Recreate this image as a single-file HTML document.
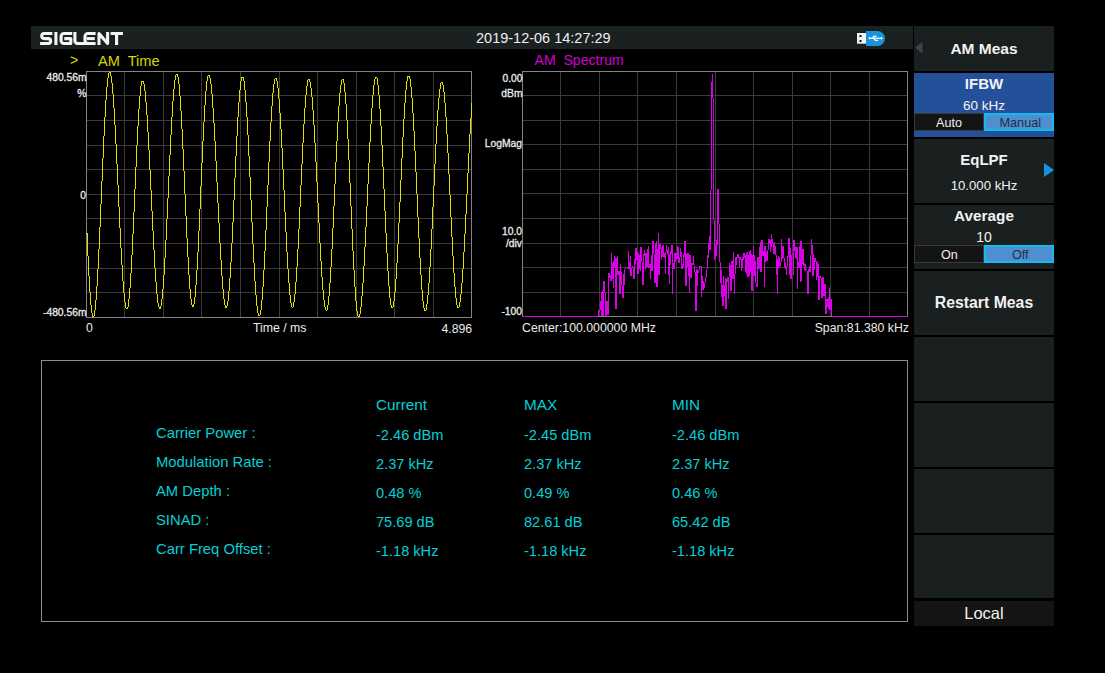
<!DOCTYPE html>
<html><head><meta charset="utf-8"><style>
html,body{margin:0;padding:0;background:#000;width:1105px;height:673px;overflow:hidden;position:relative}
body{font-family:"Liberation Sans",sans-serif;}
.t{position:absolute;white-space:pre;line-height:1}
.cy{color:#04d0d6}
.sl{-webkit-text-stroke:0.3px #ececec}
.sk{position:absolute;left:914px;width:140px;background:#1a1f1f}
.skt{position:absolute;left:0;width:140px;text-align:center;color:#f2f2f2;white-space:pre;line-height:1}
</style></head><body>
<div style="position:absolute;left:31px;top:26px;width:882px;height:23px;background:#1b2020"></div>
<svg style="position:absolute;left:0;top:0" width="130" height="50" viewBox="0 0 130 50">
<g fill="none" stroke="#f6f6f6" stroke-width="3.1" stroke-linejoin="round">
<path d="M52.4 33.5H44.3A2.55 2.55 0 0 0 44.3 38.6H48.2A2.45 2.45 0 0 1 48.2 43.5H40.1"/>
<path d="M55.9 32V45"/>
<path d="M72.3 33.5H64A2.9 2.9 0 0 0 61.1 36.4V40.6A2.9 2.9 0 0 0 64 43.5H70.8V38.6H64.3"/>
<path d="M74.9 32V40.8A2.7 2.7 0 0 0 77.6 43.5H95.6"/>
<path d="M95.6 33.5H87.9A2.9 2.9 0 0 0 85 36.4V40.6A2.9 2.9 0 0 0 87.9 43.5"/>
<path d="M86.6 38.6H94.8"/>
<path d="M99 45V33.6L107.6 43.4V32"/>
<path d="M110.6 33.5H122.9M116.6 33.5V45"/>
</g></svg>
<div class="t" style="left:476px;top:31px;font-size:14.5px;color:#f0f0f0">2019-12-06 14:27:29</div>
<svg style="position:absolute;left:850px;top:26px" width="45" height="24" viewBox="850 26 45 24">
<rect x="857" y="33" width="9.5" height="10.7" fill="#f2f2f2"/>
<rect x="859.5" y="35" width="2" height="2" fill="#111"/>
<rect x="859.5" y="40" width="2" height="2" fill="#111"/>
<path d="M866 31H877.5A7.5 7.5 0 0 1 877.5 46H866Z" fill="#1b93dc"/>
<g stroke="#fff" stroke-width="1.2" fill="none">
<path d="M869.5 38.3H881.5"/>
<path d="M872 38.3L874 36.3H876.5"/>
<path d="M873.5 38.3L875.5 40.4H878"/>
</g>
<circle cx="869.5" cy="38.3" r="1" fill="#fff"/>
<path d="M881 36.8L883 38.3L881 39.8Z" fill="#fff"/>
</svg>
<div class="t" style="left:70px;top:53px;font-size:14px;color:#d8d800">&gt;</div>
<div class="t" style="left:98px;top:54px;font-size:14.6px;color:#d8d800">AM  Time</div>
<div class="t" style="left:534.5px;top:53px;font-size:14.1px;color:#d400d4">AM  Spectrum</div>

<svg style="position:absolute;left:0;top:0" width="1105" height="673">
<rect x="124" y="71" width="1" height="246" fill="#3a3a3a"/>
<rect x="163" y="71" width="1" height="246" fill="#3a3a3a"/>
<rect x="201" y="71" width="1" height="246" fill="#3a3a3a"/>
<rect x="240" y="71" width="1" height="246" fill="#3a3a3a"/>
<rect x="279" y="71" width="1" height="246" fill="#3a3a3a"/>
<rect x="317" y="71" width="1" height="246" fill="#3a3a3a"/>
<rect x="356" y="71" width="1" height="246" fill="#3a3a3a"/>
<rect x="394" y="71" width="1" height="246" fill="#3a3a3a"/>
<rect x="433" y="71" width="1" height="246" fill="#3a3a3a"/>
<rect x="86" y="95" width="385" height="1" fill="#3a3a3a"/>
<rect x="86" y="120" width="385" height="1" fill="#3a3a3a"/>
<rect x="86" y="145" width="385" height="1" fill="#3a3a3a"/>
<rect x="86" y="169" width="385" height="1" fill="#3a3a3a"/>
<rect x="86" y="194" width="385" height="1" fill="#3a3a3a"/>
<rect x="86" y="218" width="385" height="1" fill="#3a3a3a"/>
<rect x="86" y="243" width="385" height="1" fill="#3a3a3a"/>
<rect x="86" y="268" width="385" height="1" fill="#3a3a3a"/>
<rect x="86" y="292" width="385" height="1" fill="#3a3a3a"/>
<rect x="86" y="71" width="386" height="1" fill="#848484"/>
<rect x="86" y="317" width="386" height="1" fill="#848484"/>
<rect x="86" y="71" width="1" height="247" fill="#848484"/>
<rect x="471" y="71" width="1" height="247" fill="#848484"/>
<rect x="560" y="71" width="1" height="245" fill="#3a3a3a"/>
<rect x="599" y="71" width="1" height="245" fill="#3a3a3a"/>
<rect x="637" y="71" width="1" height="245" fill="#3a3a3a"/>
<rect x="676" y="71" width="1" height="245" fill="#3a3a3a"/>
<rect x="715" y="71" width="1" height="245" fill="#3a3a3a"/>
<rect x="753" y="71" width="1" height="245" fill="#3a3a3a"/>
<rect x="792" y="71" width="1" height="245" fill="#3a3a3a"/>
<rect x="830" y="71" width="1" height="245" fill="#3a3a3a"/>
<rect x="869" y="71" width="1" height="245" fill="#3a3a3a"/>
<rect x="522" y="95" width="385" height="1" fill="#3a3a3a"/>
<rect x="522" y="120" width="385" height="1" fill="#3a3a3a"/>
<rect x="522" y="144" width="385" height="1" fill="#3a3a3a"/>
<rect x="522" y="169" width="385" height="1" fill="#3a3a3a"/>
<rect x="522" y="193" width="385" height="1" fill="#3a3a3a"/>
<rect x="522" y="218" width="385" height="1" fill="#3a3a3a"/>
<rect x="522" y="243" width="385" height="1" fill="#3a3a3a"/>
<rect x="522" y="267" width="385" height="1" fill="#3a3a3a"/>
<rect x="522" y="292" width="385" height="1" fill="#3a3a3a"/>
<rect x="522" y="71" width="386" height="1" fill="#848484"/>
<rect x="522" y="316" width="386" height="1" fill="#848484"/>
<rect x="522" y="71" width="1" height="246" fill="#848484"/>
<rect x="907" y="71" width="1" height="246" fill="#848484"/>
<path d="M86.5 233.3V234.3M87.5 233.3V255.7M88.5 255.7V275.7M89.5 275.7V292.4M90.5 292.4V305.2M91.5 305.2V313.4M92.5 313.4V316.9M93.5 315.6V316.9M94.5 309.8V315.6M95.5 299.8V309.8M96.5 286.0V299.8M97.5 268.8V286.0M98.5 248.9V268.8M99.5 227.0V248.9M100.5 203.9V227.0M101.5 180.5V203.9M102.5 157.5V180.5M103.5 136.0V157.5M104.5 116.6V136.0M105.5 100.0V116.6M106.5 86.9V100.0M107.5 77.7V86.9M108.5 72.8V77.7M109.5 72.3V73.3M110.5 72.3V75.8M111.5 75.8V83.1M112.5 83.1V93.9M113.5 93.9V107.9M114.5 107.9V124.6M115.5 124.6V143.5M116.5 143.5V164.0M117.5 164.0V185.3M118.5 185.3V206.8M119.5 206.8V227.8M120.5 227.8V247.5M121.5 247.5V265.4M122.5 265.4V280.9M123.5 280.9V293.3M124.5 293.3V302.4M125.5 302.4V307.8M126.5 307.8V309.4M127.5 306.6V309.4M128.5 299.4V306.6M129.5 288.1V299.4M130.5 273.0V288.1M131.5 254.8V273.0M132.5 234.2V254.8M133.5 212.1V234.2M134.5 189.2V212.1M135.5 166.6V189.2M136.5 145.1V166.6M137.5 125.7V145.1M138.5 108.9V125.7M139.5 95.6V108.9M140.5 86.3V95.6M141.5 81.3V86.3M142.5 80.8V81.8M143.5 80.8V84.2M144.5 84.2V91.3M145.5 91.3V101.8M146.5 101.8V115.4M147.5 115.4V131.6M148.5 131.6V149.9M149.5 149.9V169.8M150.5 169.8V190.4M151.5 190.4V211.2M152.5 211.2V231.4M153.5 231.4V250.4M154.5 250.4V267.5M155.5 267.5V282.2M156.5 282.2V294.0M157.5 294.0V302.5M158.5 302.5V307.4M159.5 307.4V308.5M160.5 305.7V308.5M161.5 299.0V305.7M162.5 288.6V299.0M163.5 274.9V288.6M164.5 258.4V274.9M165.5 239.5V258.4M166.5 219.0V239.5M167.5 197.6V219.0M168.5 175.9V197.6M169.5 154.7V175.9M170.5 134.8V154.7M171.5 116.8V134.8M172.5 101.3V116.8M173.5 88.9V101.3M174.5 79.9V88.9M175.5 74.8V79.9M176.5 73.6V74.8M177.5 73.6V76.7M178.5 76.7V84.1M179.5 84.1V95.5M180.5 95.5V110.5M181.5 110.5V128.6M182.5 128.6V148.9M183.5 148.9V170.9M184.5 170.9V193.6M185.5 193.6V216.1M186.5 216.1V237.7M187.5 237.7V257.4M188.5 257.4V274.6M189.5 274.6V288.6M190.5 288.6V298.9M191.5 298.9V305.0M192.5 305.0V306.8M193.5 304.0V306.8M194.5 296.8V304.0M195.5 285.4V296.8M196.5 270.3V285.4M197.5 252.0V270.3M198.5 231.3V252.0M199.5 209.0V231.3M200.5 186.0V209.0M201.5 163.2V186.0M202.5 141.4V163.2M203.5 121.6V141.4M204.5 104.5V121.6M205.5 90.8V104.5M206.5 81.1V90.8M207.5 75.6V81.1M208.5 74.7V75.7M209.5 74.7V77.7M210.5 77.7V84.3M211.5 84.3V94.4M212.5 94.4V107.5M213.5 107.5V123.4M214.5 123.4V141.4M215.5 141.4V161.1M216.5 161.1V181.6M217.5 181.6V202.5M218.5 202.5V223.1M219.5 223.1V242.6M220.5 242.6V260.4M221.5 260.4V276.0M222.5 276.0V288.9M223.5 288.9V298.6M224.5 298.6V304.9M225.5 304.9V307.5M226.5 306.2V307.5M227.5 300.7V306.2M228.5 291.2V300.7M229.5 278.0V291.2M230.5 261.6V278.0M231.5 242.6V261.6M232.5 221.8V242.6M233.5 199.8V221.8M234.5 177.6V199.8M235.5 155.9V177.6M236.5 135.6V155.9M237.5 117.3V135.6M238.5 101.8V117.3M239.5 89.7V101.8M240.5 81.3V89.7M241.5 77.0V81.3M242.5 77.0V78.0M243.5 77.0V81.2M244.5 81.2V89.5M245.5 89.5V101.6M246.5 101.6V117.0M247.5 117.0V135.2M248.5 135.2V155.5M249.5 155.5V177.4M250.5 177.4V199.8M251.5 199.8V222.2M252.5 222.2V243.7M253.5 243.7V263.4M254.5 263.4V280.9M255.5 280.9V295.3M256.5 295.3V306.3M257.5 306.3V313.4M258.5 313.4V316.3M259.5 315.0V316.3M260.5 309.5V315.0M261.5 299.8V309.5M262.5 286.5V299.8M263.5 269.9V286.5M264.5 250.7V269.9M265.5 229.5V250.7M266.5 207.2V229.5M267.5 184.5V207.2M268.5 162.2V184.5M269.5 141.2V162.2M270.5 122.2V141.2M271.5 105.9V122.2M272.5 92.9V105.9M273.5 83.7V92.9M274.5 78.6V83.7M275.5 77.7V78.7M276.5 77.7V80.9M277.5 80.9V88.0M278.5 88.0V98.7M279.5 98.7V112.6M280.5 112.6V129.4M281.5 129.4V148.3M282.5 148.3V168.8M283.5 168.8V190.1M284.5 190.1V211.5M285.5 211.5V232.2M286.5 232.2V251.5M287.5 251.5V268.7M288.5 268.7V283.3M289.5 283.3V294.7M290.5 294.7V302.5M291.5 302.5V306.5M292.5 306.5V307.5M293.5 302.3V306.5M294.5 294.0V302.3M295.5 282.0V294.0M296.5 266.7V282.0M297.5 248.7V266.7M298.5 228.6V248.7M299.5 207.2V228.6M300.5 185.3V207.2M301.5 163.7V185.3M302.5 143.1V163.7M303.5 124.4V143.1M304.5 108.2V124.4M305.5 95.2V108.2M306.5 85.8V95.2M307.5 80.4V85.8M308.5 79.1V80.4M309.5 79.1V81.6M310.5 81.6V87.8M311.5 87.8V97.4M312.5 97.4V110.0M313.5 110.0V125.4M314.5 125.4V142.9M315.5 142.9V162.1M316.5 162.1V182.4M317.5 182.4V203.0M318.5 203.0V223.4M319.5 223.4V242.8M320.5 242.8V260.8M321.5 260.8V276.6M322.5 276.6V289.8M323.5 289.8V300.0M324.5 300.0V306.9M325.5 306.9V310.2M326.5 309.7V310.7M327.5 305.0V309.7M328.5 296.1V305.0M329.5 283.4V296.1M330.5 267.4V283.4M331.5 248.7V267.4M332.5 227.9V248.7M333.5 206.0V227.9M334.5 183.5V206.0M335.5 161.6V183.5M336.5 140.8V161.6M337.5 122.1V140.8M338.5 106.1V122.1M339.5 93.4V106.1M340.5 84.5V93.4M341.5 79.8V84.5M342.5 79.4V80.4M343.5 79.4V83.4M344.5 83.4V91.8M345.5 91.8V104.2M346.5 104.2V120.2M347.5 120.2V139.2M348.5 139.2V160.3M349.5 160.3V182.9M350.5 182.9V206.1M351.5 206.1V229.0M352.5 229.0V250.7M353.5 250.7V270.4M354.5 270.4V287.3M355.5 287.3V300.9M356.5 300.9V310.5M357.5 310.5V315.9M358.5 315.9V316.9M359.5 313.7V316.8M360.5 306.8V313.7M361.5 296.3V306.8M362.5 282.6V296.3M363.5 266.0V282.6M364.5 247.3V266.0M365.5 226.9V247.3M366.5 205.5V226.9M367.5 183.8V205.5M368.5 162.6V183.8M369.5 142.4V162.6M370.5 124.1V142.4M371.5 108.1V124.1M372.5 94.9V108.1M373.5 85.1V94.9M374.5 79.0V85.1M375.5 76.6V79.0M376.5 76.6V78.4M377.5 78.4V84.5M378.5 84.5V94.6M379.5 94.6V108.5M380.5 108.5V125.6M381.5 125.6V145.2M382.5 145.2V166.6M383.5 166.6V188.9M384.5 188.9V211.4M385.5 211.4V233.2M386.5 233.2V253.4M387.5 253.4V271.3M388.5 271.3V286.2M389.5 286.2V297.5M390.5 297.5V304.8M391.5 304.8V307.9M392.5 306.7V307.9M393.5 301.2V306.7M394.5 291.9V301.2M395.5 278.9V291.9M396.5 262.7V278.9M397.5 244.0V262.7M398.5 223.4V244.0M399.5 201.7V223.4M400.5 179.5V201.7M401.5 157.9V179.5M402.5 137.4V157.9M403.5 118.9V137.4M404.5 103.1V118.9M405.5 90.4V103.1M406.5 81.4V90.4M407.5 76.4V81.4M408.5 75.6V76.6M409.5 75.6V79.0M410.5 79.0V86.5M411.5 86.5V97.9M412.5 97.9V112.7M413.5 112.7V130.5M414.5 130.5V150.5M415.5 150.5V172.0M416.5 172.0V194.3M417.5 194.3V216.6M418.5 216.6V238.0M419.5 238.0V257.8M420.5 257.8V275.3M421.5 275.3V289.8M422.5 289.8V300.8M423.5 300.8V307.9M424.5 307.9V310.9M425.5 309.7V310.9M426.5 304.4V309.7M427.5 295.3V304.4M428.5 282.6V295.3M429.5 266.9V282.6M430.5 248.7V266.9M431.5 228.6V248.7M432.5 207.3V228.6M433.5 185.7V207.3M434.5 164.4V185.7M435.5 144.3V164.4M436.5 126.1V144.3M437.5 110.4V126.1M438.5 97.7V110.4M439.5 88.6V97.7M440.5 83.3V88.6M441.5 82.1V83.3M442.5 82.1V85.0M443.5 85.0V91.9M444.5 91.9V102.6M445.5 102.6V116.6M446.5 116.6V133.6M447.5 133.6V152.8M448.5 152.8V173.5M449.5 173.5V195.0M450.5 195.0V216.5M451.5 216.5V237.2M452.5 237.2V256.4M453.5 256.4V273.4M454.5 273.4V287.4M455.5 287.4V298.1M456.5 298.1V305.0M457.5 305.0V307.9M458.5 306.8V307.9M459.5 302.2V306.8M460.5 294.1V302.2M461.5 282.8V294.1M462.5 268.6V282.8M463.5 252.1V268.6M464.5 233.7V252.1M465.5 214.0V233.7M466.5 193.6V214.0M467.5 173.1V193.6M468.5 153.2V173.1M469.5 134.4V153.2M470.5 117.5V134.4M471.5 102.8V117.5" stroke="#e2e000" stroke-width="1" fill="none" shape-rendering="crispEdges"/>
<path d="M522.5 316V317M523.5 316V317M524.5 316V317M525.5 316V317M526.5 316V317M527.5 316V317M528.5 316V317M529.5 316V317M530.5 316V317M531.5 316V317M532.5 316V317M533.5 316V317M534.5 316V317M535.5 316V317M536.5 316V317M537.5 316V317M538.5 316V317M539.5 316V317M540.5 316V317M541.5 316V317M542.5 316V317M543.5 316V317M544.5 316V317M545.5 316V317M546.5 316V317M547.5 316V317M548.5 316V317M549.5 316V317M550.5 316V317M551.5 316V317M552.5 316V317M553.5 316V317M554.5 316V317M555.5 316V317M556.5 316V317M557.5 316V317M558.5 316V317M559.5 316V317M560.5 316V317M561.5 316V317M562.5 316V317M563.5 316V317M564.5 316V317M565.5 316V317M566.5 316V317M567.5 316V317M568.5 316V317M569.5 316V317M570.5 316V317M571.5 316V317M572.5 316V317M573.5 316V317M574.5 316V317M575.5 316V317M576.5 316V317M577.5 316V317M578.5 316V317M579.5 316V317M580.5 316V317M581.5 316V317M582.5 316V317M583.5 316V317M584.5 316V317M585.5 316V317M586.5 316V317M587.5 316V317M588.5 316V317M589.5 316V317M590.5 316V317M591.5 316V317M592.5 316V317M593.5 316V317M594.5 316V317M595.5 316V317M596.5 316V317M597.5 316V317M598.5 310V316M599.5 310V312M600.5 301V310M601.5 292V316M602.5 291V316M603.5 281V316M604.5 281V293M605.5 293V316M606.5 301V316M607.5 301V315M608.5 273V315M609.5 273V278M610.5 275V281M611.5 253V281M612.5 263V279M613.5 261V288M614.5 256V268M615.5 258V309M616.5 258V309M617.5 256V275M618.5 271V275M619.5 271V294M620.5 264V294M621.5 272V285M622.5 285V298M623.5 274V298M624.5 269V285M625.5 267V269M626.5 267V268M627.5 268V269M628.5 251V269M629.5 262V269M630.5 256V276M631.5 268V276M632.5 266V268M633.5 267V279M634.5 259V279M635.5 248V264M636.5 248V260M637.5 252V274M638.5 253V274M639.5 255V269M640.5 247V271M641.5 247V262M642.5 262V285M643.5 254V285M644.5 250V256M645.5 253V270M646.5 253V267M647.5 249V267M648.5 246V268M649.5 264V268M650.5 264V279M651.5 255V271M652.5 241V271M653.5 241V254M654.5 254V283M655.5 244V283M656.5 241V287M657.5 249V287M658.5 233V275M659.5 244V275M660.5 244V249M661.5 247V259M662.5 245V257M663.5 245V257M664.5 253V258M665.5 252V274M666.5 245V252M667.5 250V254M668.5 247V275M669.5 254V284M670.5 251V265M671.5 245V254M672.5 245V294M673.5 263V269M674.5 253V269M675.5 253V262M676.5 253V259M677.5 246V259M678.5 247V263M679.5 257V263M680.5 248V257M681.5 252V269M682.5 264V269M683.5 254V267M684.5 241V257M685.5 241V286M686.5 254V286M687.5 253V267M688.5 253V276M689.5 255V293M690.5 255V278M691.5 263V278M692.5 263V265M693.5 256V265M694.5 265V272M695.5 272V311M696.5 269V311M697.5 270V286M698.5 270V273M699.5 266V270M700.5 266V267M701.5 266V297M702.5 276V290M703.5 281V290M704.5 283V288M705.5 277V283M706.5 269V277M707.5 255V269M708.5 243V258M709.5 236V250M710.5 190V250M711.5 82V190M712.5 74V98M713.5 98V220M714.5 220V260M715.5 245V258M716.5 240V256M717.5 189V245M718.5 189V224M719.5 224V262M720.5 262V283M721.5 270V297M722.5 285V306M723.5 276V306M724.5 285V296M725.5 278V309M726.5 279V309M727.5 277V282M728.5 277V299M729.5 263V277M730.5 265V291M731.5 261V291M732.5 261V279M733.5 252V279M734.5 274V294M735.5 257V274M736.5 257V265M737.5 254V258M738.5 254V258M739.5 257V268M740.5 257V260M741.5 259V271M742.5 257V268M743.5 253V260M744.5 253V258M745.5 255V272M746.5 253V274M747.5 252V277M748.5 255V277M749.5 251V276M750.5 250V272M751.5 254V291M752.5 255V291M753.5 246V276M754.5 255V276M755.5 261V283M756.5 283V287M757.5 257V287M758.5 257V269M759.5 247V269M760.5 242V272M761.5 240V272M762.5 240V256M763.5 251V256M764.5 246V287M765.5 246V262M766.5 252V261M767.5 250V261M768.5 239V250M769.5 239V244M770.5 240V252M771.5 234V247M772.5 239V244M773.5 243V254M774.5 242V254M775.5 246V255M776.5 255V275M777.5 259V294M778.5 256V268M779.5 257V268M780.5 262V266M781.5 239V262M782.5 246V259M783.5 246V258M784.5 258V267M785.5 263V269M786.5 266V275M787.5 256V266M788.5 238V257M789.5 238V275M790.5 248V279M791.5 255V279M792.5 254V255M793.5 240V275M794.5 240V251M795.5 247V258M796.5 247V259M797.5 247V289M798.5 262V268M799.5 246V268M800.5 241V282M801.5 241V281M802.5 249V264M803.5 249V266M804.5 263V270M805.5 264V270M806.5 269V271M807.5 271V294M808.5 269V294M809.5 266V272M810.5 255V272M811.5 239V255M812.5 245V276M813.5 254V276M814.5 258V270M815.5 258V262M816.5 261V280M817.5 262V277M818.5 264V300M819.5 276V300M820.5 276V278M821.5 278V298M822.5 277V298M823.5 277V296M824.5 284V296M825.5 284V314M826.5 299V314M827.5 299V307M828.5 297V309M829.5 288V310M830.5 299V310M831.5 299V316M832.5 316V317M833.5 316V317M834.5 316V317M835.5 316V317M836.5 316V317M837.5 316V317M838.5 316V317M839.5 316V317M840.5 316V317M841.5 316V317M842.5 316V317M843.5 316V317M844.5 316V317M845.5 316V317M846.5 316V317M847.5 316V317M848.5 316V317M849.5 316V317M850.5 316V317M851.5 316V317M852.5 316V317M853.5 316V317M854.5 316V317M855.5 316V317M856.5 316V317M857.5 316V317M858.5 316V317M859.5 316V317M860.5 316V317M861.5 316V317M862.5 316V317M863.5 316V317M864.5 316V317M865.5 316V317M866.5 316V317M867.5 316V317M868.5 316V317M869.5 316V317M870.5 316V317M871.5 316V317M872.5 316V317M873.5 316V317M874.5 316V317M875.5 316V317M876.5 316V317M877.5 316V317M878.5 316V317M879.5 316V317M880.5 316V317M881.5 316V317M882.5 316V317M883.5 316V317M884.5 316V317M885.5 316V317M886.5 316V317M887.5 316V317M888.5 316V317M889.5 316V317M890.5 316V317M891.5 316V317M892.5 316V317M893.5 316V317M894.5 316V317M895.5 316V317M896.5 316V317M897.5 316V317M898.5 316V317M899.5 316V317M900.5 316V317M901.5 316V317M902.5 316V317M903.5 316V317M904.5 316V317M905.5 316V317M906.5 316V317M907.5 316V317" stroke="#d604e4" stroke-width="1" fill="none" shape-rendering="crispEdges"/>
<rect x="41" y="360" width="867" height="1" fill="#8c8c8c"/>
<rect x="41" y="621" width="867" height="1" fill="#8c8c8c"/>
<rect x="41" y="360" width="1" height="262" fill="#8c8c8c"/>
<rect x="907" y="360" width="1" height="262" fill="#8c8c8c"/>
</svg>

<div class="t sl" style="right:1018.5px;top:73px;font-size:10.3px;color:#ececec;text-align:right;">480.56m</div>
<div class="t sl" style="right:1018.5px;top:89px;font-size:10.3px;color:#ececec;text-align:right;">%</div>
<div class="t sl" style="right:1019px;top:191px;font-size:10.3px;color:#ececec;text-align:right;">0</div>
<div class="t sl" style="right:1018.5px;top:308px;font-size:10.3px;color:#ececec;text-align:right;">-480.56m</div>
<div class="t sl" style="right:582.5px;top:74px;font-size:10.3px;color:#ececec;text-align:right;">0.00</div>
<div class="t sl" style="right:582.5px;top:89px;font-size:10.3px;color:#ececec;text-align:right;">dBm</div>
<div class="t sl" style="right:583px;top:139px;font-size:10.3px;color:#ececec;text-align:right;">LogMag</div>
<div class="t sl" style="right:583px;top:227px;font-size:10.3px;color:#ececec;text-align:right;">10.0</div>
<div class="t sl" style="right:583px;top:239px;font-size:10.3px;color:#ececec;text-align:right;">/div</div>
<div class="t sl" style="right:583px;top:307px;font-size:10.3px;color:#ececec;text-align:right;">-100</div>
<div class="t " style="right:632.8px;top:322.5px;font-size:12.3px;color:#ececec;text-align:right;">4.896</div>
<div class="t " style="right:196px;top:322px;font-size:12.3px;color:#ececec;text-align:right;">Span:81.380 kHz</div>
<div class="t" style="left:86px;top:322px;font-size:12.3px;color:#ececec">0</div>
<div class="t" style="left:253px;top:322px;font-size:12.3px;color:#ececec">Time / ms</div>
<div class="t" style="left:522px;top:322px;font-size:12.3px;color:#ececec">Center:100.000000 MHz</div>

<div class="t cy" style="left:376px;top:396.5px;font-size:15.3px">Current</div>
<div class="t cy" style="left:524px;top:396.5px;font-size:15.3px">MAX</div>
<div class="t cy" style="left:672px;top:396.5px;font-size:15.3px">MIN</div>
<div class="t cy" style="left:156px;top:419px;font-size:14.8px;line-height:28.95px">Carrier Power :
Modulation Rate :
AM Depth :
SINAD :
Carr Freq Offset :</div>
<div class="t cy" style="left:376px;top:421px;font-size:14.6px;line-height:29.0px">-2.46 dBm
2.37 kHz
0.48 %
75.69 dB
-1.18 kHz</div>
<div class="t cy" style="left:524px;top:421px;font-size:14.6px;line-height:29.0px">-2.45 dBm
2.37 kHz
0.49 %
82.61 dB
-1.18 kHz</div>
<div class="t cy" style="left:672px;top:421px;font-size:14.6px;line-height:29.0px">-2.46 dBm
2.37 kHz
0.46 %
65.42 dB
-1.18 kHz</div>

<!-- softkeys -->
<div class="sk" style="top:26px;height:45px">
  <svg style="position:absolute;left:1px;top:16px" width="9" height="12"><path d="M0 5.8L7.4 0V11.5Z" fill="#3a4750"/></svg>
  <div class="skt" style="top:15px;font-size:15.5px;font-weight:bold">AM Meas</div>
</div>
<div class="sk" style="top:73px;height:64px;background:#24509a">
  <div class="skt" style="top:3px;font-size:15px;font-weight:bold">IFBW</div>
  <div class="skt" style="top:26px;font-size:13.5px">60 kHz</div>
  <div style="position:absolute;left:0;top:40px;width:68px;height:16px;background:#141414;border:1px solid #3a3a3a"></div>
  <div style="position:absolute;left:70px;top:40px;width:66px;height:14px;background:#508fcf;border:2px solid #10bdf2"></div>
  <div class="t" style="left:22px;top:43.5px;font-size:12.6px;color:#f0f0f0">Auto</div>
  <div class="t" style="left:85.5px;top:43.5px;font-size:12.7px;color:#1d2d4d">Manual</div>
</div>
<div class="sk" style="top:139px;height:64px">
  <div class="skt" style="top:13px;font-size:15px;font-weight:bold">EqLPF</div>
  <div class="skt" style="top:40px;font-size:13.2px">10.000 kHz</div>
  <svg style="position:absolute;left:130px;top:24px" width="10" height="14"><path d="M0 0L10 7L0 14Z" fill="#1591e6"/></svg>
</div>
<div class="sk" style="top:205px;height:64px">
  <div class="skt" style="top:3px;font-size:15.3px;font-weight:bold">Average</div>
  <div class="skt" style="top:25px;font-size:14px">10</div>
  <div style="position:absolute;left:0;top:40px;width:68px;height:16px;background:#141414;border:1px solid #3a3a3a"></div>
  <div style="position:absolute;left:70px;top:40px;width:66px;height:14px;background:#508fcf;border:2px solid #10bdf2"></div>
  <div class="t" style="left:27px;top:43.5px;font-size:12.6px;color:#f0f0f0">On</div>
  <div class="t" style="left:98px;top:43.5px;font-size:12.6px;color:#1d2d4d">Off</div>
</div>
<div class="sk" style="top:271px;height:64px">
  <div class="skt" style="top:24px;font-size:15.8px;font-weight:bold">Restart Meas</div>
</div>
<div class="sk" style="top:337px;height:64px"></div>
<div class="sk" style="top:403px;height:64px"></div>
<div class="sk" style="top:469px;height:64px"></div>
<div class="sk" style="top:535px;height:63px"></div>
<div class="sk" style="top:601px;height:25px;background:#141414">
  <div class="skt" style="top:4px;font-size:16.5px">Local</div>
</div>
</body></html>
